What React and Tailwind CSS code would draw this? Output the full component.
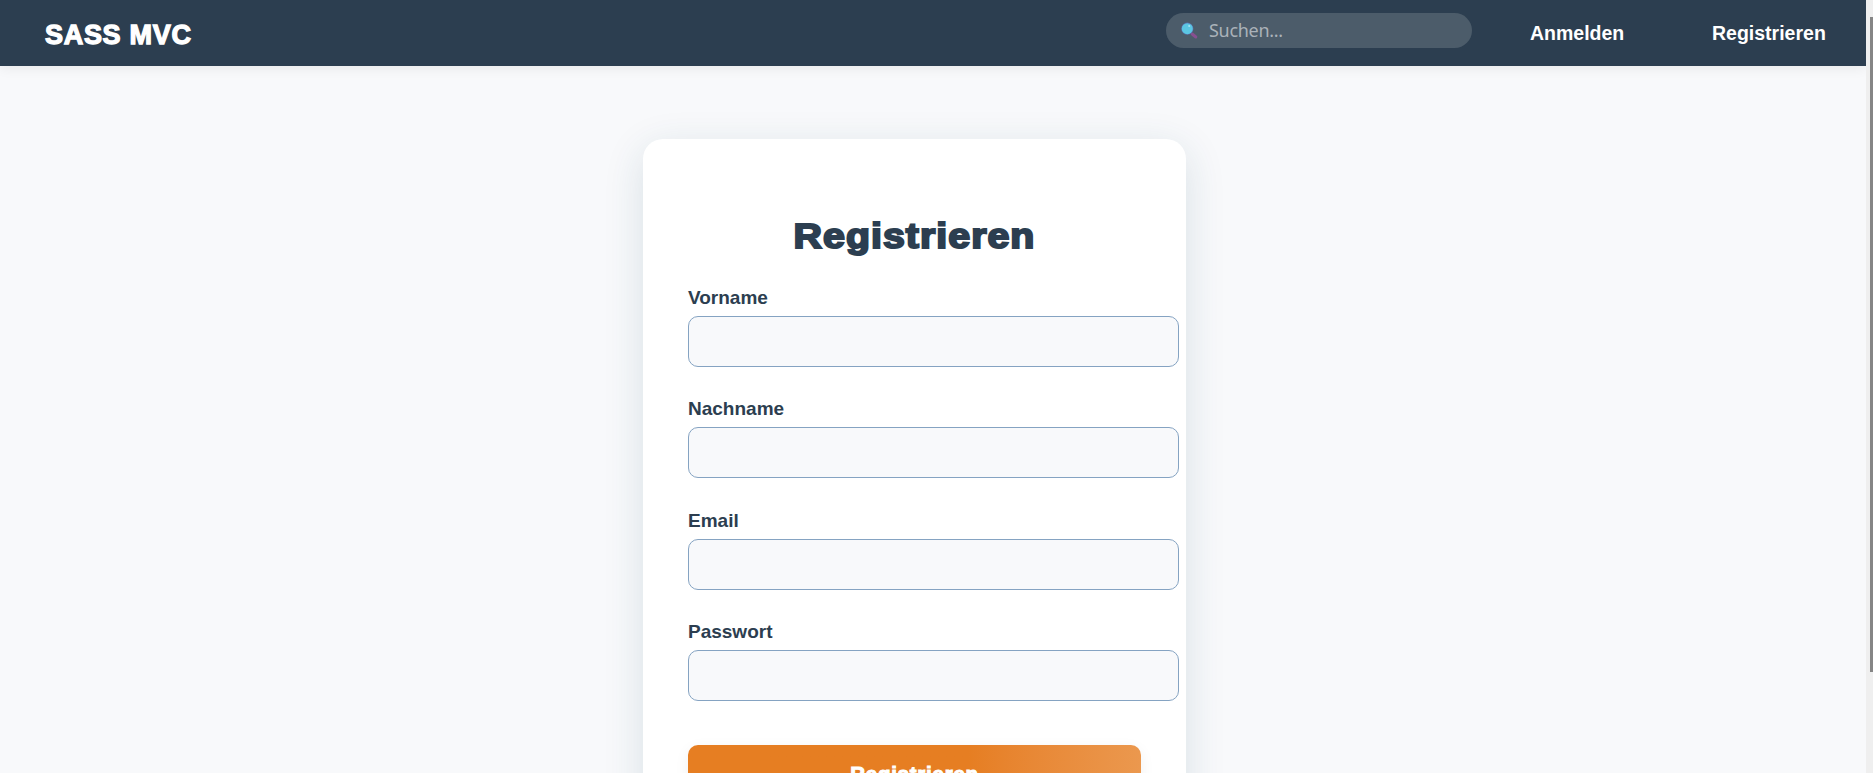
const fields = ["Vorname", "Nachname", "Email", "Passwort"];

function SearchIcon() {
  return (
    <svg className="h-[18px] w-[18px] shrink-0" viewBox="0 0 18 18">
      <path d="M11.2 12 14.8 15" stroke="#875090" strokeWidth="3" strokeLinecap="round" />
      <circle cx="6.3" cy="6.7" r="6.1" fill="#5a6fae" />
      <circle cx="6.3" cy="6.7" r="5.5" fill="#5bc6e2" />
      <circle cx="8.2" cy="3.9" r="1" fill="#a5e6f5" />
    </svg>
  );
}

function Header() {
  return (
    <header className="flex h-[66px] shrink-0 items-center bg-[#2c3e50] pl-[45px] pr-10 text-white shadow-[0_2px_12px_rgba(0,0,0,0.07)]">
      <a className="mt-[3px] w-[147px] whitespace-nowrap text-[27px] font-bold leading-8 tracking-[0.7px] [-webkit-text-stroke:1.3px_white]">SASS MVC</a>
      <div className="mb-[5px] ml-auto flex h-[35px] w-[306px] items-center rounded-full bg-[#4c5c6a] pl-[15px]">
        <SearchIcon />
        <span className="mb-[2px] ml-[10px] font-['Noto_Sans',sans-serif] text-[18px] leading-6 tracking-[-0.3px] text-[#aab2b9]">Suchen...</span>
      </div>
      <nav className="mb-px flex text-[19.5px] font-bold leading-6">
        <a className="ml-[58px] w-[95px] whitespace-nowrap">Anmelden</a>
        <a className="ml-[87px] w-[114px] whitespace-nowrap">Registrieren</a>
      </nav>
    </header>
  );
}

function Field({ label }) {
  return (
    <label className="block h-[111.4px]">
      <span className="block h-[30px] text-[19px] font-bold leading-[23px] text-[#2c3e50]">{label}</span>
      <input className="block h-[51px] w-[491px] rounded-[10px] border border-[#85a3c2] bg-[#f8f9fb] px-4 outline-none" />
    </label>
  );
}

export default function App() {
  return (
    <div className="flex h-[773px] w-[1873px] overflow-hidden bg-[#f8f9fb] font-['Liberation_Sans',Arial,sans-serif]">
      <div className="flex h-full w-[1866px] flex-col">
        <Header />
        <main className="ml-[643px] mt-[73px] h-[760px] w-[543px] shrink-0 rounded-[20px] bg-white px-[45px] pt-[72px] shadow-[0_10px_40px_rgba(30,76,96,0.14)]">
          <h1 className="mb-[25px] scale-x-114 text-center text-[34.5px] font-bold leading-[50px] tracking-[0.9px] text-[#2c3e50] [-webkit-text-stroke:2px_#2c3e50]">Registrieren</h1>
          <form>
            {fields.map((f) => (
              <Field key={f} label={f} />
            ))}
            <button type="button" className="mt-[13px] block h-[59px] w-[453px] rounded-[10px] bg-linear-to-r from-[#e67e22] from-62% to-[#eb984e] text-[20.5px] font-bold tracking-[0.75px] text-white shadow-[0_4px_15px_rgba(0,0,0,0.06)] [-webkit-text-stroke:1px_white]">Registrieren</button>
          </form>
        </main>
      </div>
      <aside className="h-full w-[7px] bg-[#efefef] pl-[4px] pt-[17px]">
        <div className="h-[655px] w-[3px] bg-[#858585]" />
      </aside>
    </div>
  );
}
